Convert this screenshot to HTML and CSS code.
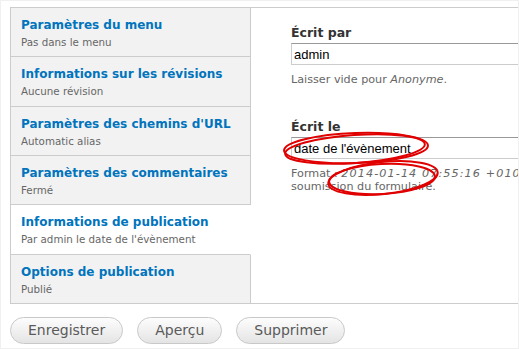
FILE: index.html
```html
<html>
<head>
<meta charset="utf-8">
<meta name="viewport" content="width=device-width, initial-scale=1">
<link rel="stylesheet" href="styles.css">
</head>
<body>
<div class="page">
	<form class="node-form">
		<div class="vtabs">
			<ul class="vtabs-menu">
				<li class="vtab"><a href="#"><strong>Paramètres du menu</strong><span class="summary">Pas dans le menu</span></a></li>
				<li class="vtab"><a href="#"><strong>Informations sur les révisions</strong><span class="summary">Aucune révision</span></a></li>
				<li class="vtab"><a href="#"><strong>Paramètres des chemins d'URL</strong><span class="summary">Automatic alias</span></a></li>
				<li class="vtab"><a href="#"><strong>Paramètres des commentaires</strong><span class="summary">Fermé</span></a></li>
				<li class="vtab selected"><a href="#"><strong>Informations de publication</strong><span class="summary">Par admin le date de l'évènement</span></a></li>
				<li class="vtab"><a href="#"><strong>Options de publication</strong><span class="summary">Publié</span></a></li>
			</ul>
			<div class="vtabs-pane">
				<div class="form-item">
					<label for="name">Écrit par</label>
					<input type="text" class="form-text" id="name" value="admin" autocomplete="off">
					<div class="description">Laisser vide pour <em>Anonyme</em>.</div>
				</div>
				<div class="form-item">
					<label for="date">Écrit le</label>
					<input type="text" class="form-text" id="date" value="date de l'évènement" autocomplete="off">
					<div class="description">Format : <em class="date">2014-01-14 07:55:16 +0100</em>. Laisser vide pour utiliser la date de soumission du formulaire.</div>
				</div>
			</div>
		</div>
		<div class="actions">
			<input type="button" class="button" value="Enregistrer">
			<input type="button" class="button" value="Aperçu">
			<input type="button" class="button" value="Supprimer">
		</div>
	</form>
	<svg class="marks" width="519" height="349">
		<g fill="none" stroke="#e00000" stroke-width="2">
			<ellipse cx="355" cy="147" rx="72" ry="15" transform="rotate(-2 355 147)"/>
			<ellipse cx="354" cy="148" rx="70" ry="14" transform="rotate(-4 354 148)"/>
			<ellipse cx="382" cy="177" rx="55" ry="16" transform="rotate(-6 382 177)"/>
			<ellipse cx="381" cy="178" rx="53" ry="15" transform="rotate(-3 381 178)"/>
		</g>
	</svg>
</div>
</body>
</html>
```

FILE: styles.css
```css
html, body {
	margin: 0;
	background: #fff;
}

body {
	font-family: "DejaVu Sans", Verdana, sans-serif;
	color: #333;
}

.page {
	position: relative;
	width: 519px;
	height: 349px;
	box-sizing: border-box;
	border: 1px solid #f0f0f0;
	padding: 6px 0 0 9px;
	overflow: hidden;
}

.node-form {
	margin: 0;
}

.vtabs {
	display: flex;
	width: 800px;
	border: 1px solid #ccc;
}

.vtabs-menu {
	list-style: none;
	margin: 0;
	padding: 0;
	width: 240px;
	flex: none;
}

.vtab {
	box-sizing: border-box;
	background: #f2f2f2;
	border-right: 1px solid #ccc;
	border-bottom: 1px solid #ccc;
	padding: 8px 10px 6.33px;
}
.vtab:last-child {
	border-bottom: none;
}
.vtab.selected {
	background: #fff;
	border-right-color: #fff;
}

.vtab a {
	display: block;
	text-decoration: none;
}
.vtab strong {
	display: block;
	color: #0074bd;
	font-size: 12px;
	line-height: 18px;
	white-space: nowrap;
}
.vtab .summary {
	display: block;
	color: #666;
	font-size: 10.3px;
	line-height: 16px;
	white-space: nowrap;
}

.vtabs-pane {
	flex: 1;
	padding: 16px 20px 0 40px;
}

.form-item + .form-item {
	margin-top: 32px;
}

.form-item label {
	display: block;
	font-weight: bold;
	font-size: 12.5px;
	line-height: 18px;
	color: #333;
	margin-bottom: 1px;
}

.form-text {
	display: block;
	width: 100%;
	height: 22px;
	box-sizing: border-box;
	margin: 0;
	padding: 0 2px;
	border: 1px solid #ccc;
	border-top-color: #999;
	font-family: "Liberation Sans", Arial, sans-serif;
	font-size: 13px;
	color: #000;
	background: #fff;
}

.description {
	margin-top: 8px;
	width: 500px;
	font-size: 11.2px;
	line-height: 13px;
	color: #666;
}
.description .date {
	letter-spacing: 1.1px;
}

.actions {
	display: flex;
	gap: 14px;
	margin-top: 13px;
}

.button {
	height: 27px;
	margin: 0;
	padding: 0 17px;
	border: 1px solid #c8c8c8;
	border-radius: 20px;
	background: linear-gradient(#fdfdfd, #e4e4e4);
	font-family: "DejaVu Sans", Verdana, sans-serif;
	font-size: 14px;
	color: #5a5a5a;
}

.marks {
	position: absolute;
	left: 0;
	top: 0;
	pointer-events: none;
}
```
